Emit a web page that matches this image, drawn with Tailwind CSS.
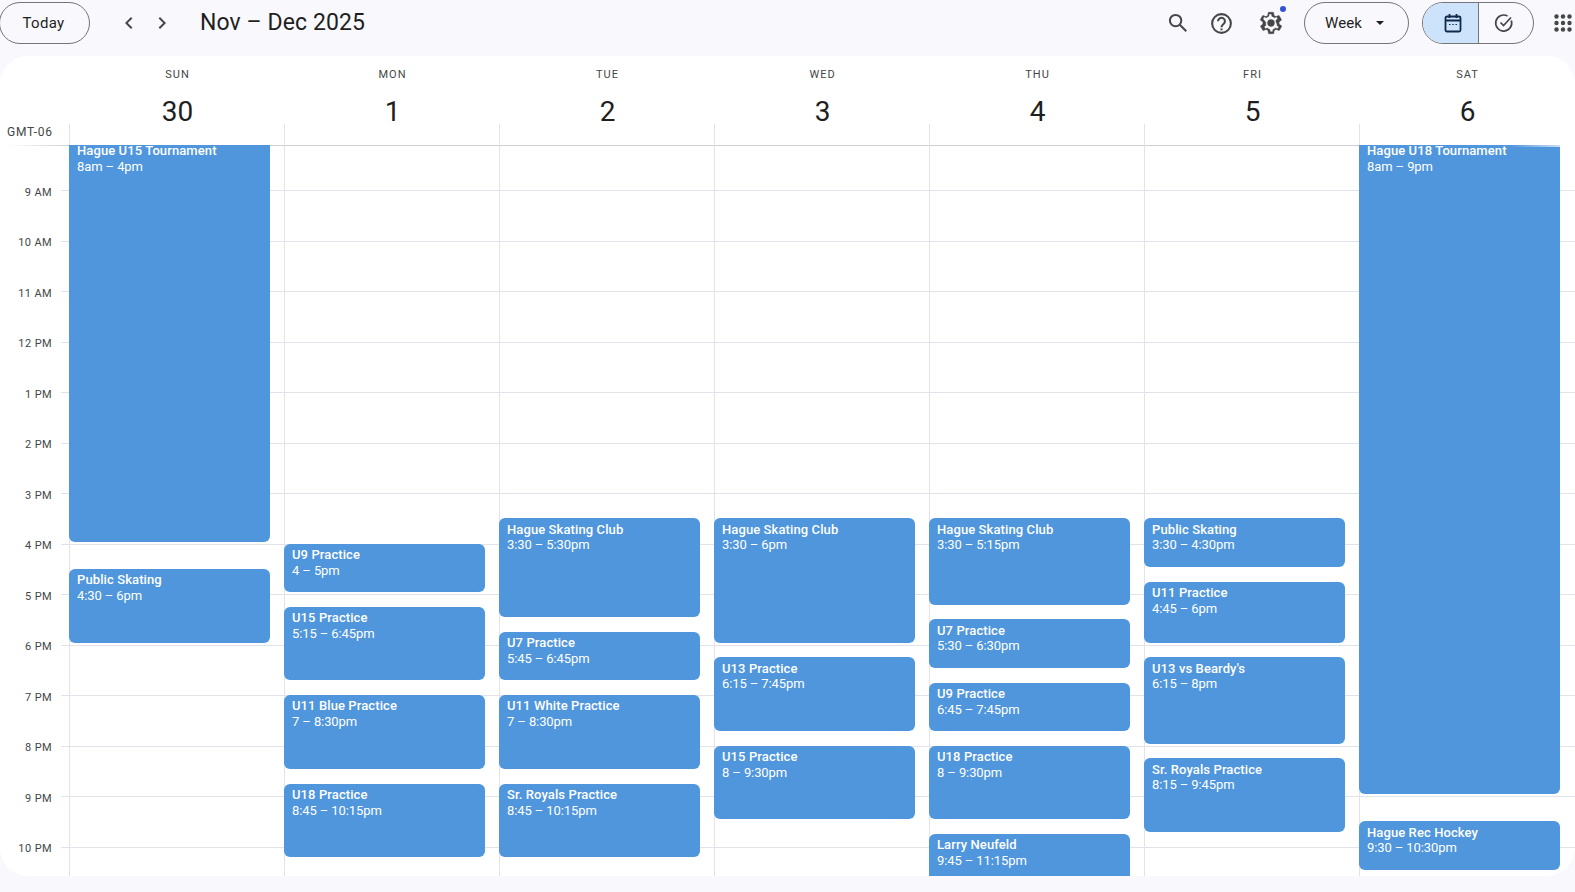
<!DOCTYPE html>
<html lang="en">
<head>
    <meta charset="UTF-8">
    <title>Calendar - Week of November 30, 2025</title>
    <script src="https://cdn.jsdelivr.net/npm/@tailwindcss/browser@4"></script>
</head>
<body class="bg-[#f9f8fc] h-[892px] w-[1575px] overflow-hidden font-['Roboto',sans-serif] text-[#1f1f1f]">
    <!-- Top bar -->
    <header class="h-[56px] flex items-start pt-[2px] relative">
        <button class="ml-[-1px] w-[91px] h-[42px] pr-[2px] rounded-full border border-[#747775] text-[15px] tracking-[0.3px] font-[450] text-[#1f1f1f]">Today</button>
        <svg class="ml-[27px] mt-[9px] w-[24px] h-[24px]" viewBox="0 0 24 24" fill="#444746"><path d="M15.4 7.4 14 6l-6 6 6 6 1.4-1.4L10.8 12z"/></svg>
        <svg class="ml-[9px] mt-[9px] w-[24px] h-[24px]" viewBox="0 0 24 24" fill="#444746"><path d="M8.6 7.4 10 6l6 6-6 6-1.4-1.4L13.2 12z"/></svg>
        <h1 class="ml-[26px] mt-[5px] text-[23px] tracking-[0.1px] leading-[32px] font-normal text-[#1f1f1f]">Nov – Dec 2025</h1>

        <div class="ml-auto flex items-center h-[42px]">
            <svg class="w-[24px] h-[24px]" viewBox="0 0 24 24" fill="none" stroke="#444746" stroke-width="2"><circle cx="9.6" cy="9.6" r="5.7"/><path d="m13.800 13.800 6.500 6.500"/></svg>
            <svg class="ml-[19px] w-[25px] h-[25px]" viewBox="0 0 24 24" fill="none" stroke="#444746" stroke-width="2"><circle cx="12" cy="12" r="9"/><path d="M8.700 9.800a3.300 3.300 0 1 1 5.300 2.600c-1.300 1-2 1.500-2 3.100"/><path d="M12 16.800v1.700"/></svg>
            <div class="relative ml-[24px] w-[26px] h-[26px]">
                <svg class="w-[26px] h-[26px]" viewBox="0 0 24 24" fill="#444746" stroke="#444746" stroke-width="0.4"><path fill-rule="evenodd" d="M19.4 13c.1-.3.1-.7.1-1s0-.7-.1-1l2.100-1.600c.2-.2.2-.4.1-.6l-2-3.500c-.1-.2-.4-.3-.6-.2l-2.500 1c-.5-.4-1.100-.7-1.700-1l-.4-2.600c0-.3-.2-.4-.5-.4h-4c-.3 0-.5.2-.5.4l-.4 2.600c-.6.3-1.200.6-1.700 1l-2.500-1c-.2-.1-.5 0-.6.2l-2 3.500c-.1.2-.1.4.1.6L4.600 11c-.1.3-.1.7-.1 1s0 .7.1 1l-2.100 1.600c-.2.2-.2.4-.1.6l2 3.500c.1.2.4.3.6.2l2.500-1c.5.4 1.100.7 1.700 1l.4 2.600c0 .3.2.4.5.4h4c.3 0 .5-.2.5-.4l.4-2.600c.6-.3 1.200-.6 1.700-1l2.500 1c.2.1.5 0 .6-.2l2-3.500c.1-.2.1-.4-.1-.6zm-1.800-.1c0 .4 0 .8-.1 1.300l1.700 1.300-1.100 1.900-2-.8c-.7.6-1.400 1.100-2.300 1.400l-.3 2.100h-2.200l-.3-2.100c-.9-.3-1.600-.8-2.300-1.400l-2 .8-1.100-1.900 1.700-1.300c-.2-.9-.2-1.900 0-2.700L4.600 8.200l1.100-1.900 2 .8c.7-.6 1.400-1.100 2.300-1.400l.3-2.100h2.200l.3 2.100c.9.3 1.600.8 2.300 1.400l2-.8 1.100 1.900-1.700 1.300c.1.5.1.9.1 1.400zM12 8.800a3.200 3.200 0 1 0 0 6.400 3.200 3.200 0 0 0 0-6.400z"/></svg>
                <span class="absolute top-[-4px] right-[-2px] w-[6px] h-[6px] rounded-full bg-[#2f55d4]"></span>
            </div>
            <button class="ml-[20px] w-[105px] h-[42px] rounded-full border border-[#747775] flex items-center pl-[20px] text-[15px] tracking-[0.1px] font-[450] text-[#1f1f1f]">Week
                <span class="ml-[14px] w-0 h-0 border-x-[4.5px] border-x-transparent border-t-[4.5px] border-t-[#1f1f1f]"></span>
            </button>
            <div class="ml-[13px] w-[112px] h-[42px] rounded-full border border-[#747775] flex overflow-hidden">
                <div class="w-[56px] bg-[#cde3fb] border-r border-[#747775] flex items-center justify-center pl-[4px]">
                    <svg class="w-[20px] h-[20px]" viewBox="0 0 20 20" fill="none" stroke="#0e2b4d" stroke-width="1.8"><rect x="2.500" y="3.500" width="15" height="15" rx="1.500"/><path d="M2.500 7.500h15M6.500 1v4M13.500 1v4"/><path d="M6 11.500h1.500M9.300 11.500h1.500M12.500 11.500H14" stroke-width="1.200"/></svg>
                </div>
                <div class="flex-1 flex items-center justify-center pr-[4px]">
                    <svg class="w-[20px] h-[20px]" viewBox="0 0 20 20" fill="none" stroke="#444746" stroke-width="1.700"><path d="M17.300 7.500A8 8 0 1 1 13.500 3"/><path d="m6.500 9.500 3 3 7.500-8"/></svg>
                </div>
            </div>
            <svg class="ml-[20px] mr-[3px] w-[18px] h-[18px]" viewBox="0 0 18 18" fill="#444746"><circle cx="2.500" cy="2.500" r="2.200"/><circle cx="9" cy="2.500" r="2.200"/><circle cx="15.500" cy="2.500" r="2.200"/><circle cx="2.500" cy="9" r="2.200"/><circle cx="9" cy="9" r="2.200"/><circle cx="15.500" cy="9" r="2.200"/><circle cx="2.500" cy="15.500" r="2.200"/><circle cx="9" cy="15.500" r="2.200"/><circle cx="15.500" cy="15.500" r="2.200"/></svg>
        </div>
    </header>

    <!-- Calendar card -->
    <main class="h-[820px] bg-white rounded-[28px] overflow-hidden flex flex-col">
        <!-- Day header -->
        <div class="h-[89px] flex shrink-0 relative">
            <div class="w-[69px] relative">
                <span class="absolute left-[7px] top-[69px] text-[12px] leading-[14px] tracking-[0.8px] text-[#444746]">GMT-06</span>
            </div>
            <div class="w-[215px] relative pl-[2px] flex flex-col items-center">
                <span class="absolute left-0 top-[68px] bottom-0 w-px bg-[#e2e2ea]"></span>
                <span class="mt-[12px] text-[11px] leading-[14px] font-normal tracking-[1px] text-[#444746]">SUN</span>
                <span class="mt-[10px] text-[28px] leading-[40px] text-[#1f1f1f]">30</span>
            </div>
            <div class="w-[215px] relative pl-[2px] flex flex-col items-center">
                <span class="absolute left-0 top-[68px] bottom-0 w-px bg-[#e2e2ea]"></span>
                <span class="mt-[12px] text-[11px] leading-[14px] font-normal tracking-[1px] text-[#444746]">MON</span>
                <span class="mt-[10px] text-[28px] leading-[40px] text-[#1f1f1f]">1</span>
            </div>
            <div class="w-[215px] relative pl-[2px] flex flex-col items-center">
                <span class="absolute left-0 top-[68px] bottom-0 w-px bg-[#e2e2ea]"></span>
                <span class="mt-[12px] text-[11px] leading-[14px] font-normal tracking-[1px] text-[#444746]">TUE</span>
                <span class="mt-[10px] text-[28px] leading-[40px] text-[#1f1f1f]">2</span>
            </div>
            <div class="w-[215px] relative pl-[2px] flex flex-col items-center">
                <span class="absolute left-0 top-[68px] bottom-0 w-px bg-[#e2e2ea]"></span>
                <span class="mt-[12px] text-[11px] leading-[14px] font-normal tracking-[1px] text-[#444746]">WED</span>
                <span class="mt-[10px] text-[28px] leading-[40px] text-[#1f1f1f]">3</span>
            </div>
            <div class="w-[215px] relative pl-[2px] flex flex-col items-center">
                <span class="absolute left-0 top-[68px] bottom-0 w-px bg-[#e2e2ea]"></span>
                <span class="mt-[12px] text-[11px] leading-[14px] font-normal tracking-[1px] text-[#444746]">THU</span>
                <span class="mt-[10px] text-[28px] leading-[40px] text-[#1f1f1f]">4</span>
            </div>
            <div class="w-[215px] relative pl-[2px] flex flex-col items-center">
                <span class="absolute left-0 top-[68px] bottom-0 w-px bg-[#e2e2ea]"></span>
                <span class="mt-[12px] text-[11px] leading-[14px] font-normal tracking-[1px] text-[#444746]">FRI</span>
                <span class="mt-[10px] text-[28px] leading-[40px] text-[#1f1f1f]">5</span>
            </div>
            <div class="w-[215px] relative pl-[2px] flex flex-col items-center">
                <span class="absolute left-0 top-[68px] bottom-0 w-px bg-[#e2e2ea]"></span>
                <span class="mt-[12px] text-[11px] leading-[14px] font-normal tracking-[1px] text-[#444746]">SAT</span>
                <span class="mt-[10px] text-[28px] leading-[40px] text-[#1f1f1f]">6</span>
            </div>
        </div>

        <!-- Time grid -->
        <div class="flex-1 flex overflow-hidden relative">
            <!-- Time labels -->
            <div class="w-[69px] shrink-0 text-[11px] text-[#444746] tracking-[0.4px]">
                <div class="h-[40.5px]"></div>
                <div class="h-[50.5px] pr-[17px] text-right leading-[14px]">9 AM</div>
                <div class="h-[50.5px] pr-[17px] text-right leading-[14px]">10 AM</div>
                <div class="h-[50.5px] pr-[17px] text-right leading-[14px]">11 AM</div>
                <div class="h-[50.5px] pr-[17px] text-right leading-[14px]">12 PM</div>
                <div class="h-[50.5px] pr-[17px] text-right leading-[14px]">1 PM</div>
                <div class="h-[50.5px] pr-[17px] text-right leading-[14px]">2 PM</div>
                <div class="h-[50.5px] pr-[17px] text-right leading-[14px]">3 PM</div>
                <div class="h-[50.5px] pr-[17px] text-right leading-[14px]">4 PM</div>
                <div class="h-[50.5px] pr-[17px] text-right leading-[14px]">5 PM</div>
                <div class="h-[50.5px] pr-[17px] text-right leading-[14px]">6 PM</div>
                <div class="h-[50.5px] pr-[17px] text-right leading-[14px]">7 PM</div>
                <div class="h-[50.5px] pr-[17px] text-right leading-[14px]">8 PM</div>
                <div class="h-[50.5px] pr-[17px] text-right leading-[14px]">9 PM</div>
                <div class="h-[50.5px] pr-[17px] text-right leading-[14px]">10 PM</div>
            </div>

            <!-- Header rule, with its fade at both ends -->
            <div class="absolute left-[7px] w-[62px] top-0 h-px bg-linear-to-r from-transparent to-[#cfcfd6]"></div>
            <div class="absolute left-[69px] right-0 top-0 h-px bg-linear-to-r from-[#cfcfd6] from-90% to-white"></div>

            <!-- Hour lines, behind the day columns -->
            <div class="absolute left-[61px] right-0 top-[45px]">
                <div class="h-[50.5px] border-t border-[#e2e2ea]"></div>
                <div class="h-[50.5px] border-t border-[#e2e2ea]"></div>
                <div class="h-[50.5px] border-t border-[#e2e2ea]"></div>
                <div class="h-[50.5px] border-t border-[#e2e2ea]"></div>
                <div class="h-[50.5px] border-t border-[#e2e2ea]"></div>
                <div class="h-[50.5px] border-t border-[#e2e2ea]"></div>
                <div class="h-[50.5px] border-t border-[#e2e2ea]"></div>
                <div class="h-[50.5px] border-t border-[#e2e2ea]"></div>
                <div class="h-[50.5px] border-t border-[#e2e2ea]"></div>
                <div class="h-[50.5px] border-t border-[#e2e2ea]"></div>
                <div class="h-[50.5px] border-t border-[#e2e2ea]"></div>
                <div class="h-[50.5px] border-t border-[#e2e2ea]"></div>
                <div class="h-[50.5px] border-t border-[#e2e2ea]"></div>
                <div class="h-[50.5px] border-t border-[#e2e2ea]"></div>
            </div>

            <!-- Sunday -->
            <div class="w-[215px] shrink-0 relative border-l border-[#e2e2ea]">
                <div class="absolute left-[-1px] w-[201px] top-[-5px] h-[402px] bg-[#4f96dd] rounded-[6px] px-[8px] pt-[3px] text-white text-[13px] leading-[15.5px]"><p class="font-medium tracking-[0.1px]">Hague U15 Tournament</p><p class="tracking-[-0.1px]">8am – 4pm</p></div>
                <div class="absolute left-[-1px] w-[201px] top-[424px] h-[74px] bg-[#4f96dd] rounded-[6px] px-[8px] pt-[3px] text-white text-[13px] leading-[15.5px]"><p class="font-medium tracking-[0.1px]">Public Skating</p><p class="tracking-[-0.1px]">4:30 – 6pm</p></div>
            </div>
            <!-- Monday -->
            <div class="w-[215px] shrink-0 relative border-l border-[#e2e2ea]">
                <div class="absolute left-[-1px] w-[201px] top-[399px] h-[48px] bg-[#4f96dd] rounded-[6px] px-[8px] pt-[3px] text-white text-[13px] leading-[15.5px]"><p class="font-medium tracking-[0.1px]">U9 Practice</p><p class="tracking-[-0.1px]">4 – 5pm</p></div>
                <div class="absolute left-[-1px] w-[201px] top-[462px] h-[73px] bg-[#4f96dd] rounded-[6px] px-[8px] pt-[3px] text-white text-[13px] leading-[15.5px]"><p class="font-medium tracking-[0.1px]">U15 Practice</p><p class="tracking-[-0.1px]">5:15 – 6:45pm</p></div>
                <div class="absolute left-[-1px] w-[201px] top-[550px] h-[74px] bg-[#4f96dd] rounded-[6px] px-[8px] pt-[3px] text-white text-[13px] leading-[15.5px]"><p class="font-medium tracking-[0.1px]">U11 Blue Practice</p><p class="tracking-[-0.1px]">7 – 8:30pm</p></div>
                <div class="absolute left-[-1px] w-[201px] top-[639px] h-[73px] bg-[#4f96dd] rounded-[6px] px-[8px] pt-[3px] text-white text-[13px] leading-[15.5px]"><p class="font-medium tracking-[0.1px]">U18 Practice</p><p class="tracking-[-0.1px]">8:45 – 10:15pm</p></div>
            </div>
            <!-- Tuesday -->
            <div class="w-[215px] shrink-0 relative border-l border-[#e2e2ea]">
                <div class="absolute left-[-1px] w-[201px] top-[373px] h-[99px] bg-[#4f96dd] rounded-[6px] px-[8px] pt-[3.75px] text-white text-[13px] leading-[15.5px]"><p class="font-medium tracking-[0.1px]">Hague Skating Club</p><p class="tracking-[-0.1px]">3:30 – 5:30pm</p></div>
                <div class="absolute left-[-1px] w-[201px] top-[487px] h-[48px] bg-[#4f96dd] rounded-[6px] px-[8px] pt-[3px] text-white text-[13px] leading-[15.5px]"><p class="font-medium tracking-[0.1px]">U7 Practice</p><p class="tracking-[-0.1px]">5:45 – 6:45pm</p></div>
                <div class="absolute left-[-1px] w-[201px] top-[550px] h-[74px] bg-[#4f96dd] rounded-[6px] px-[8px] pt-[3px] text-white text-[13px] leading-[15.5px]"><p class="font-medium tracking-[0.1px]">U11 White Practice</p><p class="tracking-[-0.1px]">7 – 8:30pm</p></div>
                <div class="absolute left-[-1px] w-[201px] top-[639px] h-[73px] bg-[#4f96dd] rounded-[6px] px-[8px] pt-[3px] text-white text-[13px] leading-[15.5px]"><p class="font-medium tracking-[0.1px]">Sr. Royals Practice</p><p class="tracking-[-0.1px]">8:45 – 10:15pm</p></div>
            </div>
            <!-- Wednesday -->
            <div class="w-[215px] shrink-0 relative border-l border-[#e2e2ea]">
                <div class="absolute left-[-1px] w-[201px] top-[373px] h-[125px] bg-[#4f96dd] rounded-[6px] px-[8px] pt-[3.75px] text-white text-[13px] leading-[15.5px]"><p class="font-medium tracking-[0.1px]">Hague Skating Club</p><p class="tracking-[-0.1px]">3:30 – 6pm</p></div>
                <div class="absolute left-[-1px] w-[201px] top-[512px] h-[74px] bg-[#4f96dd] rounded-[6px] px-[8px] pt-[3.6px] text-white text-[13px] leading-[15.5px]"><p class="font-medium tracking-[0.1px]">U13 Practice</p><p class="tracking-[-0.1px]">6:15 – 7:45pm</p></div>
                <div class="absolute left-[-1px] w-[201px] top-[601px] h-[73px] bg-[#4f96dd] rounded-[6px] px-[8px] pt-[3px] text-white text-[13px] leading-[15.5px]"><p class="font-medium tracking-[0.1px]">U15 Practice</p><p class="tracking-[-0.1px]">8 – 9:30pm</p></div>
            </div>
            <!-- Thursday -->
            <div class="w-[215px] shrink-0 relative border-l border-[#e2e2ea]">
                <div class="absolute left-[-1px] w-[201px] top-[373px] h-[87px] bg-[#4f96dd] rounded-[6px] px-[8px] pt-[3.75px] text-white text-[13px] leading-[15.5px]"><p class="font-medium tracking-[0.1px]">Hague Skating Club</p><p class="tracking-[-0.1px]">3:30 – 5:15pm</p></div>
                <div class="absolute left-[-1px] w-[201px] top-[474px] h-[49px] bg-[#4f96dd] rounded-[6px] px-[8px] pt-[3.6px] text-white text-[13px] leading-[15.5px]"><p class="font-medium tracking-[0.1px]">U7 Practice</p><p class="tracking-[-0.1px]">5:30 – 6:30pm</p></div>
                <div class="absolute left-[-1px] w-[201px] top-[538px] h-[48px] bg-[#4f96dd] rounded-[6px] px-[8px] pt-[3px] text-white text-[13px] leading-[15.5px]"><p class="font-medium tracking-[0.1px]">U9 Practice</p><p class="tracking-[-0.1px]">6:45 – 7:45pm</p></div>
                <div class="absolute left-[-1px] w-[201px] top-[601px] h-[73px] bg-[#4f96dd] rounded-[6px] px-[8px] pt-[3px] text-white text-[13px] leading-[15.5px]"><p class="font-medium tracking-[0.1px]">U18 Practice</p><p class="tracking-[-0.1px]">8 – 9:30pm</p></div>
                <div class="absolute left-[-1px] w-[201px] top-[689px] h-[73px] bg-[#4f96dd] rounded-[6px] px-[8px] pt-[3px] text-white text-[13px] leading-[15.5px]"><p class="font-medium tracking-[0.1px]">Larry Neufeld</p><p class="tracking-[-0.1px]">9:45 – 11:15pm</p></div>
            </div>
            <!-- Friday -->
            <div class="w-[215px] shrink-0 relative border-l border-[#e2e2ea]">
                <div class="absolute left-[-1px] w-[201px] top-[373px] h-[49px] bg-[#4f96dd] rounded-[6px] px-[8px] pt-[3.75px] text-white text-[13px] leading-[15.5px]"><p class="font-medium tracking-[0.1px]">Public Skating</p><p class="tracking-[-0.1px]">3:30 – 4:30pm</p></div>
                <div class="absolute left-[-1px] w-[201px] top-[437px] h-[61px] bg-[#4f96dd] rounded-[6px] px-[8px] pt-[3px] text-white text-[13px] leading-[15.5px]"><p class="font-medium tracking-[0.1px]">U11 Practice</p><p class="tracking-[-0.1px]">4:45 – 6pm</p></div>
                <div class="absolute left-[-1px] w-[201px] top-[512px] h-[87px] bg-[#4f96dd] rounded-[6px] px-[8px] pt-[3.6px] text-white text-[13px] leading-[15.5px]"><p class="font-medium tracking-[0.1px]">U13 vs Beardy's</p><p class="tracking-[-0.1px]">6:15 – 8pm</p></div>
                <div class="absolute left-[-1px] w-[201px] top-[613px] h-[74px] bg-[#4f96dd] rounded-[6px] px-[8px] pt-[3.6px] text-white text-[13px] leading-[15.5px]"><p class="font-medium tracking-[0.1px]">Sr. Royals Practice</p><p class="tracking-[-0.1px]">8:15 – 9:45pm</p></div>
            </div>
            <!-- Saturday -->
            <div class="w-[215px] shrink-0 relative border-l border-[#e2e2ea]">
                <div class="absolute left-[-1px] w-[201px] top-[-5px] h-[654px] bg-[#4f96dd] rounded-[6px] px-[8px] pt-[3px] text-white text-[13px] leading-[15.5px]"><p class="font-medium tracking-[0.1px]">Hague U18 Tournament</p><p class="tracking-[-0.1px]">8am – 9pm</p></div>
                <div class="absolute left-[-1px] w-[201px] top-[676px] h-[49px] bg-[#4f96dd] rounded-[6px] px-[8px] pt-[3.75px] text-white text-[13px] leading-[15.5px]"><p class="font-medium tracking-[0.1px]">Hague Rec Hockey</p><p class="tracking-[-0.1px]">9:30 – 10:30pm</p></div>
                <div class="absolute left-[150px] w-[50px] top-0 h-[2px] bg-linear-to-r from-transparent to-white/70"></div>
            </div>
        </div>
    </main>
</body>
</html>
